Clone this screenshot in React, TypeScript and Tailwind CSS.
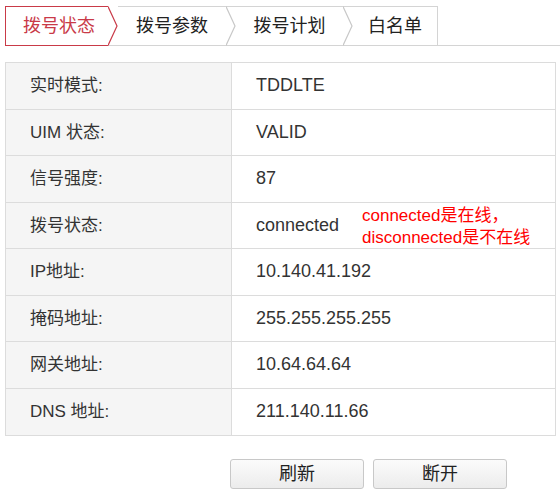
const rows: { label: string; value: string }[] = [
  { label: '实时模式:', value: 'TDDLTE' },
  { label: 'UIM 状态:', value: 'VALID' },
  { label: '信号强度:', value: '87' },
  { label: '拨号状态:', value: 'connected' },
  { label: 'IP地址:', value: '10.140.41.192' },
  { label: '掩码地址:', value: '255.255.255.255' },
  { label: '网关地址:', value: '10.64.64.64' },
  { label: 'DNS 地址:', value: '211.140.11.66' },
]

const font = { fontFamily: '"Liberation Sans", "Noto Sans CJK SC", sans-serif' }

function Chevron({ color, top = true }: { color: string; top?: boolean }) {
  return (
    <svg width="10" height="40" viewBox="0 0 10 40" className="shrink-0 -mb-px">
      {top && <path d="M0 0.5 H10 M0 39.5 H10" stroke="#d4d4d4" strokeWidth="1" />}
      <path d="M0 0.5 L9 20 L0 39.5" fill="none" stroke={color} strokeWidth="1.2" />
    </svg>
  )
}

export default function App() {
  return (
    <div className="w-[560px] h-[494px] bg-white text-[#333]" style={font}>
      {/* tabs */}
      <div className="pt-[6px] pl-[5px]">
        <div className="flex h-[40px] border-b border-[#d4d4d4]">
          <div className="flex items-center w-[103px] h-[40px] -mb-px border border-r-0 border-[#c93a48] pl-[17px] text-[18px] text-[#c93a48]">
            拨号状态
          </div>
          <Chevron color="#c93a48" top={false} />
          <div className="flex items-center justify-center w-[108px] h-[40px] -mb-px border-t border-b border-[#d4d4d4] text-[18px] text-[#222]">
            拨号参数
          </div>
          <Chevron color="#c8c8c8" />
          <div className="flex items-center justify-center w-[107px] h-[40px] -mb-px border-t border-b border-[#d4d4d4] text-[18px] text-[#222]">
            拨号计划
          </div>
          <Chevron color="#c8c8c8" />
          <div className="flex items-center justify-center w-[85px] h-[40px] -mb-px border-t border-b border-r border-[#d4d4d4] text-[18px] text-[#222]">
            白名单
          </div>
        </div>
      </div>

      {/* status table */}
      <div className="mt-[16px] ml-[5px] w-[551px] border border-[#dcdcdc]">
        {rows.map((r, i) => (
          <div
            key={r.label}
            className={`flex h-[46.5px] ${i < rows.length - 1 ? 'border-b border-[#dcdcdc]' : ''}`}
          >
            <div className="w-[226px] shrink-0 flex items-center pl-[24px] bg-[#f5f5f5] border-r border-[#dcdcdc] text-[17px] text-[#333]">
              {r.label}
            </div>
            <div className="flex-1 flex items-center pl-[24px] text-[18px] text-[#333]">
              {i === 3 ? (
                <>
                  <span className="w-[106px]">{r.value}</span>
                  <div className="text-[17px] leading-[22px] text-[#ff0000] mt-[4px]">
                    <div>connected是在线，</div>
                    <div>disconnected是不在线</div>
                  </div>
                </>
              ) : (
                r.value
              )}
            </div>
          </div>
        ))}
      </div>

      {/* actions */}
      <div className="flex gap-[9px] mt-[23px] ml-[230px]">
        <button className="w-[134px] h-[30px] rounded-[3px] border border-[#c8c8c8] bg-gradient-to-b from-[#fbfbfb] to-[#ececec] text-[18px] text-[#222]">
          刷新
        </button>
        <button className="w-[134px] h-[30px] rounded-[3px] border border-[#c8c8c8] bg-gradient-to-b from-[#fbfbfb] to-[#ececec] text-[18px] text-[#222]">
          断开
        </button>
      </div>
    </div>
  )
}
